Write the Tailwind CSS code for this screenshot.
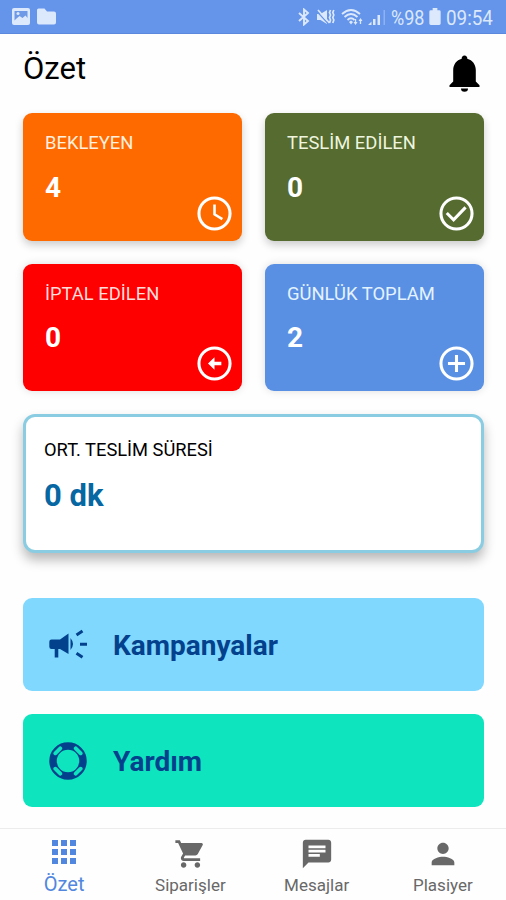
<!DOCTYPE html>
<html lang="tr">
<head>
<meta charset="utf-8">
<title>Özet</title>
<script src="https://cdn.jsdelivr.net/npm/@tailwindcss/browser@4"></script>
</head>
<body class="bg-white">
<div class="w-[506px] h-[900px] flex flex-col overflow-hidden bg-[#fefefe] font-['Roboto',sans-serif] text-black">

  <!-- Status bar -->
  <header class="h-[34px] shrink-0 bg-[#6495ea] border-b border-[#5b88dc] flex items-center pl-3 pr-[13px] text-[#dce8fb]">
    <svg class="w-[18px] h-[17px]" viewBox="0 0 18 17"><rect width="18" height="17" rx="2" fill="currentColor"/><path d="M2.500 3h13v7l-2-2.500-3 2.500-3-2-3 2.500-2 2z" fill="#6e99e6"/><circle cx="6" cy="5.500" r="1.500" fill="currentColor"/></svg>
    <svg class="w-[19px] h-[17px] ml-[7px]" viewBox="0 0 19 17"><path d="M1.500 0.500h6l2.500 3h7q2 0 2 2v9q0 2-2 2h-15q-2 0-2-2v-12.500q0-1.500 1.500-1.500z" fill="currentColor"/></svg>
    <div class="flex-1"></div>
    <svg class="w-[12px] h-[18px] -translate-x-[1px]" viewBox="0 0 12 18" fill="none" stroke="currentColor" stroke-width="1.900"><path d="M1 5l9 8L6 16.500V1.500L10 5l-9 8"/></svg>
    <svg class="w-[20px] h-[18px] ml-[5px] mr-[2px]" viewBox="0 0 20 18"><path d="M1 6h3.500L11 2v14l-6.500-4H1z" fill="currentColor"/><path d="M1 3.500l11 12" stroke="#6495ea" stroke-width="1.200"/><path d="M2 2l11.500 13M14.500 2l-1 2.500 1 2.500-1 2.500 1 2.500-1 3M17.800 2l-1 2.500 1 2.500-1 2.500 1 2.500-1 3" fill="none" stroke="currentColor" stroke-width="1.700"/></svg>
    <svg class="w-[23px] h-[18px] ml-[3px] mr-[2px]" viewBox="0 0 23 18" fill="none" stroke="currentColor" stroke-width="1.900"><path d="M1 6q9-8 18 0M3.500 9q6.500-6 13 0M6.500 12q3.500-3.500 7 0"/><path d="M8 14l2-1.500 2 1.500-2 2.500z" fill="currentColor" stroke="none"/><path d="M14.500 17l-2-3h4zM19.500 10l-2 3h4z" fill="currentColor" stroke="none"/><path d="M14.500 11v3M19.500 13v3" stroke-width="1.300"/></svg>
    <svg class="w-[17px] h-[18px] ml-[2px]" viewBox="0 0 17 18" fill="currentColor"><path d="M0 17l3.500-3.500V17zM5 11h2.500v6H5zM9.500 7H12v10H9.500z"/><path d="M15.500 2H17v15h-1.500z" opacity=".35"/></svg>
    <span class="ml-[6px] w-[35px] text-[20px] leading-[34px] whitespace-nowrap"><span class="inline-block origin-left scale-x-[.9] translate-y-px">%98</span></span>
    <svg class="w-[12px] h-[17px] ml-[3px] mr-[1px]" viewBox="0 0 12 18" fill="currentColor"><path d="M3.500 0h5v2.500h2q1.500 0 1.500 1.500v12.500q0 1.500-1.500 1.500h-9Q0 18 0 16.500V4q0-1.500 1.500-1.500h2z"/></svg>
    <span class="ml-[4px] w-[47px] text-[20px] leading-[34px] whitespace-nowrap"><span class="inline-block origin-left scale-x-[.94] translate-y-px">09:54</span></span>
  </header>

  <!-- Title -->
  <div class="h-[79px] shrink-0 flex justify-between pl-[23px] pr-[26px]">
    <h1 class="mt-[15px] text-[31px] leading-[40px]">Özet</h1>
    <svg class="mt-[21px] w-[31px] h-[38px]" viewBox="0 0 31 38"><path d="M15.500 0.500a2.800 2.800 0 0 1 2.800 3.200C23.500 5 26.800 9.500 26.800 15v11.500l3.700 3.800V32H.5v-1.700l3.700-3.800V15C4.200 9.500 7.500 5 12.700 3.700A2.800 2.800 0 0 1 15.500.5zM12 33.500h7a3.500 3.200 0 0 1-7 0z"/></svg>
  </div>

  <!-- Dashboard -->
  <main class="flex-1 pl-[23px] pr-[22px]">
    <div class="grid grid-cols-2 gap-x-[23px] gap-y-[23px]">
      <section class="h-[128px] rounded-[9px] bg-[#ff6a00] text-white shadow-[0_4px_9px_rgba(0,0,0,.2)] flex justify-between pl-[22px] pr-[7px] pt-[18px] pb-[7px]">
        <div><h2 class="text-[18.400px] leading-6 whitespace-nowrap text-[#ffefdf]">BEKLEYEN</h2><p class="mt-[17px] text-[28px] leading-8 font-bold">4</p></div>
        <svg class="w-[41px] h-[41px] self-end shrink-0 -ml-10" viewBox="0 0 24 24" fill="none" stroke="currentColor" stroke-width="1.800"><circle cx="12" cy="12" r="9.100"/><path d="M12 6.800v5.700l4.600 2.800" stroke-width="1.500"/></svg>
      </section>
      <section class="h-[128px] rounded-[9px] bg-[#556b2f] text-white shadow-[0_4px_9px_rgba(0,0,0,.2)] flex justify-between pl-[22px] pr-[7px] pt-[18px] pb-[7px]">
        <div><h2 class="text-[18.400px] leading-6 whitespace-nowrap text-[#eff5df]">TESLİM EDİLEN</h2><p class="mt-[17px] text-[28px] leading-8 font-bold">0</p></div>
        <svg class="w-[41px] h-[41px] self-end shrink-0 -ml-10" viewBox="0 0 24 24" fill="none" stroke="currentColor" stroke-width="1.800"><circle cx="12" cy="12" r="9.100"/><path d="M6.300 11.700l4 4 7-7.300"/></svg>
      </section>
      <section class="h-[127px] rounded-[9px] bg-[#fe0000] text-white shadow-[0_0_8px_rgba(0,0,0,.13)] flex justify-between pl-[22px] pr-[7px] pt-[18px] pb-[7px]">
        <div><h2 class="text-[18.400px] leading-6 whitespace-nowrap text-[#ffdcdc]">İPTAL EDİLEN</h2><p class="mt-4 text-[28px] leading-8 font-bold">0</p></div>
        <svg class="w-[41px] h-[41px] self-end shrink-0 -ml-10" viewBox="0 0 24 24" fill="none" stroke="currentColor" stroke-width="1.800"><circle cx="12" cy="12" r="9.100"/><path d="M12 8.300v2.700h4v2h-4v2.700L8.200 12z" fill="currentColor" stroke="none"/></svg>
      </section>
      <section class="h-[127px] rounded-[9px] bg-[#5990e4] text-white shadow-[0_0_8px_rgba(0,0,0,.13)] flex justify-between pl-[22px] pr-[7px] pt-[18px] pb-[7px]">
        <div><h2 class="text-[18.400px] leading-6 whitespace-nowrap text-[#e4f3ff]">GÜNLÜK TOPLAM</h2><p class="mt-4 text-[28px] leading-8 font-bold">2</p></div>
        <svg class="w-[41px] h-[41px] self-end shrink-0 -ml-10" viewBox="0 0 24 24" fill="none" stroke="currentColor" stroke-width="1.800"><circle cx="12" cy="12" r="9.100"/><path d="M12 7v10M7 12h10"/></svg>
      </section>
    </div>

    <section class="mt-[23px] h-[139px] rounded-[12px] border-[3px] border-[#8acde2] bg-white shadow-[0_7px_12px_rgba(0,0,0,.28)] pl-[18px] pt-[21px]">
      <h2 class="text-[18.300px] leading-6">ORT. TESLİM SÜRESİ</h2>
      <p class="mt-[17px] text-[31px] leading-[34px] font-bold text-[#0667a3]">0 dk</p>
    </section>

    <a class="mt-[45px] h-[93px] rounded-[9px] bg-[#81d8ff] flex items-center pl-[25px] text-[#03418d]">
      <svg class="w-[40px] h-[32px]" viewBox="0 0 40 32"><path d="M3.500 10.500H12L20.500 4.500v20.500L12 20h-1.700v8.500H6.700V20H3.500q-2.200 0-2.200-2.200v-5.100q0-2.200 2.200-2.200z" fill="currentColor"/><path d="M22.500 9q5 6 0 12z" fill="currentColor"/><path d="M28.500 6l6-4M32 15.200h7M28.500 24.200l6 4" stroke="currentColor" stroke-width="3"/></svg>
      <span class="ml-[25px] mt-[3px] text-[28px] leading-8 font-bold">Kampanyalar</span>
    </a>
    <a class="mt-[23px] h-[93px] rounded-[9px] bg-[#0ee5bf] flex items-center pl-[26px] text-[#03418d]">
      <svg class="w-[38px] h-[38px]" viewBox="0 0 38 38" fill="none"><circle cx="19" cy="19" r="15" stroke="currentColor" stroke-width="7.500"/><path d="M6.300 11.300l5-5M26.700 6.300l5 5M31.700 26.700l-5 5M11.300 31.700l-5-5" stroke="#0ee5bf" stroke-width="3.800" stroke-linecap="round"/></svg>
      <span class="ml-[26px] mt-[3px] text-[28px] leading-8 font-bold">Yardım</span>
    </a>
  </main>

  <!-- Bottom navigation -->
  <nav class="h-[72px] shrink-0 border-t border-[#ececec] grid grid-cols-4 pl-px text-[#686868]">
    <a class="flex flex-col items-center text-[#5187de]">
      <svg class="mt-[11px] w-[24px] h-[24px]" viewBox="0 0 24 24" fill="currentColor"><path d="M0 0h6v6H0zM9 0h6v6H9zM18 0h6v6h-6zM0 9h6v6H0zM9 9h6v6H9zM18 9h6v6h-6zM0 18h6v6H0zM9 18h6v6H9zM18 18h6v6h-6z"/></svg>
      <span class="mt-[8px] text-[20px] leading-6">Özet</span>
    </a>
    <a class="flex flex-col items-center">
      <svg class="mt-[8px] w-[33px] h-[34px]" viewBox="0 0 24 24" fill="currentColor"><path d="M7 18c-1.100 0-1.990.9-1.990 2S5.900 22 7 22s2-.9 2-2-.9-2-2-2zM1 2v2h2l3.600 7.590-1.350 2.450c-.16.280-.25.610-.25.960 0 1.100.9 2 2 2h12v-2H7.420c-.14 0-.25-.11-.25-.25l.03-.12.900-1.630h7.450c.75 0 1.410-.41 1.750-1.030l3.580-6.490A1 1 0 0 0 20 4H5.210l-.94-2H1zm16 16c-1.100 0-1.990.9-1.990 2s.89 2 1.990 2 2-.9 2-2-.9-2-2-2z"/></svg>
      <span class="mt-[2px] text-[17px] leading-6">Siparişler</span>
    </a>
    <a class="flex flex-col items-center">
      <svg class="mt-[8px] w-[34px] h-[34px]" viewBox="0 0 24 24" fill="currentColor"><path d="M20 2H4c-1.100 0-1.990.9-1.990 2L2 22l4-4h14c1.100 0 2-.9 2-2V4c0-1.100-.9-2-2-2zM6 9h12v2H6V9zm8 5H6v-2h8v2zm4-6H6V6h12v2z"/></svg>
      <span class="mt-[2px] text-[17px] leading-6">Mesajlar</span>
    </a>
    <a class="flex flex-col items-center">
      <svg class="mt-[8px] w-[34px] h-[34px]" viewBox="0 0 24 24" fill="currentColor"><path d="M12 12c2.210 0 4-1.790 4-4s-1.790-4-4-4-4 1.790-4 4 1.790 4 4 4zm0 2c-2.670 0-8 1.340-8 4v2h16v-2c0-2.660-5.330-4-8-4z"/></svg>
      <span class="mt-[2px] text-[17px] leading-6">Plasiyer</span>
    </a>
  </nav>
</div>
</body>
</html>
